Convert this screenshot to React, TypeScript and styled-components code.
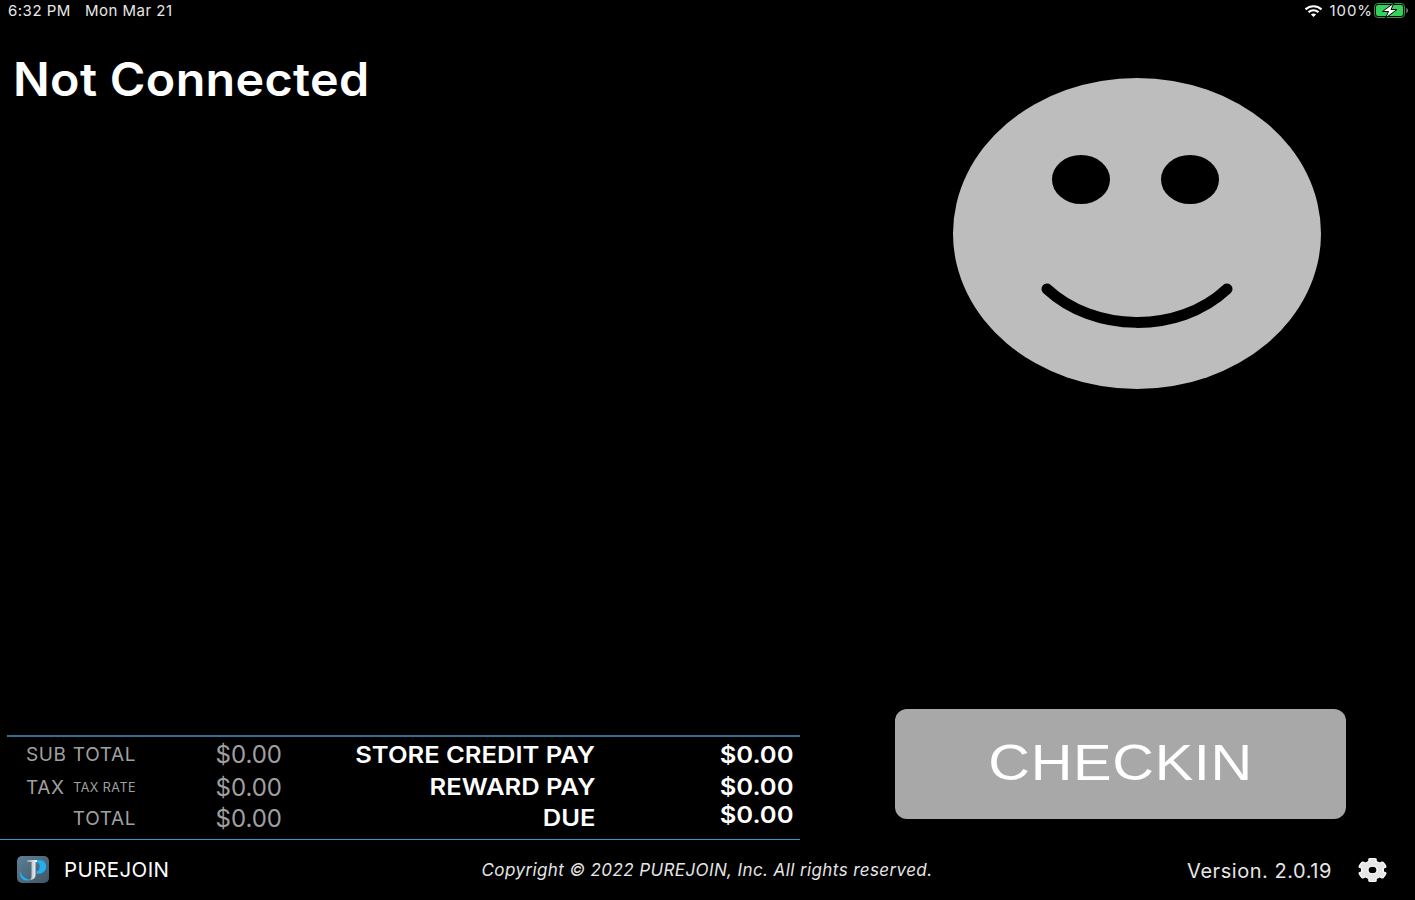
import { createGlobalStyle, styled } from "styled-components";
import { FaCog } from "react-icons/fa";

const GlobalStyle = createGlobalStyle`
  html, body {
    margin: 0;
    padding: 0;
    background: #000;
  }
  body {
    font-family: Inter, "Liberation Sans", sans-serif;
    color: #fff;
  }
`;

const Page = styled.div`
  width: 1415px;
  height: 900px;
  display: flex;
  flex-direction: column;
  background: #000;
  overflow: hidden;
`;

const StatusBar = styled.div`
  height: 21px;
  flex: none;
  display: flex;
  align-items: center;
  justify-content: space-between;
  padding: 0 6px 0 8px;
  font-size: 15px;
  letter-spacing: 0.5px;
  color: #e8e8e8;
`;

const StatusGroup = styled.div<{ $gap: number }>`
  display: flex;
  align-items: center;
  gap: ${(p) => p.$gap}px;
`;

const BatteryPercent = styled.span`
  margin: 0 -4px 0 1px;
  letter-spacing: 0.95px;
`;

const Main = styled.div`
  flex: 1;
  display: grid;
  grid-template-columns: 800px 1fr;
  min-height: 0;
`;

const LeftColumn = styled.div`
  display: flex;
  flex-direction: column;
  justify-content: space-between;
`;

const Title = styled.h1`
  margin: 29px 0 0 13px;
  font-size: 46px;
  line-height: 58px;
  font-weight: 600;
  letter-spacing: 0.3px;
  transform: scaleX(1.053);
  transform-origin: left center;
`;

const RightColumn = styled.div`
  display: flex;
  flex-direction: column;
  justify-content: space-between;
  padding: 57px 69px 20px 95px;
`;

const Face = styled.svg`
  display: block;
  width: 368px;
  height: 311px;
  margin-left: 58px;
`;

const CheckinButton = styled.button`
  width: 451px;
  height: 110px;
  padding: 0 0 2px;
  border: 0;
  border-radius: 12px;
  background: #a8a8a8;
  color: #fff;
  font-family: "Liberation Sans", Arial, sans-serif;
  font-size: 50px;
  line-height: 1;
`;

const CheckinLabel = styled.span`
  display: inline-block;
  letter-spacing: 0.6px;
  transform: scaleX(1.155);
`;

const TotalsFrame = styled.div`
  margin-left: 7px;
  border-top: 2px solid #2f6f92;
`;

const Totals = styled.div`
  height: 102px;
  box-sizing: border-box;
  padding: 0 6px;
  display: flex;
  justify-content: space-between;
`;

const SummaryGrid = styled.div`
  display: grid;
  grid-template-columns: 110px 146px;
  grid-template-rows: 34px 32px 30px;
  padding-left: 13px;
  color: #a0a0a0;
  align-items: center;
`;

const SummaryLabel = styled.div<{ $end?: boolean }>`
  display: flex;
  justify-content: ${(p) => (p.$end ? "flex-end" : "space-between")};
  align-items: center;
  font-size: 19px;
  letter-spacing: 0.6px;
  white-space: nowrap;
`;

const TaxRate = styled.span`
  font-size: 12.5px;
  letter-spacing: 0.5px;
`;

const SummaryAmount = styled.div`
  font-size: 24px;
  text-align: right;
`;

const PayGrid = styled.div`
  display: grid;
  grid-template-columns: 240px 199px;
  grid-template-rows: 32px 32px 30px;
  padding-top: 2px;
  align-items: center;
  font-size: 23px;
  line-height: 24px;
  font-weight: 600;
  text-align: right;
`;

const PayLabel = styled.span`
  display: inline-block;
  white-space: nowrap;
  transform: scaleX(1.11);
  transform-origin: right center;
`;

const PayAmount = styled.div<{ $raised?: boolean }>`
  align-self: ${(p) => (p.$raised ? "start" : "center")};
`;

const BottomRule = styled.div`
  height: 1px;
  width: 800px;
  background: #3b93c9;
`;

const Footer = styled.div`
  height: 60px;
  flex: none;
  display: grid;
  grid-template-columns: 1fr auto 1fr;
  align-items: center;
  padding: 0 28px 0 17px;
`;

const Brand = styled.div`
  display: flex;
  align-items: center;
  gap: 15px;
  font-size: 20.5px;
  letter-spacing: 0.4px;
`;

const BrandName = styled.span`
  padding-bottom: 2px;
`;

const Copyright = styled.div`
  margin-left: 10px;
  font-size: 17px;
  font-style: italic;
  letter-spacing: 0.4px;
  color: #e6e6e6;
`;

const VersionGroup = styled.div`
  display: flex;
  align-items: center;
  justify-content: flex-end;
  gap: 26px;
  font-size: 20px;
  letter-spacing: 0.55px;
  color: #e6e6e6;
`;

const VersionText = styled.span`
  padding-top: 2px;
`;

const Gear = styled(FaCog)`
  width: 29px;
  height: 24px;
  stroke: #fff;
  stroke-width: 22px;
`;

function Wifi() {
  return (
    <svg width="19" height="14" viewBox="0 0 19 14" fill="none" stroke="#fff" strokeWidth="2.2">
      <path d="M1.5 5.4 C6 1.2 13 1.2 17.5 5.4" />
      <path d="M4.5 8.2 C7.5 5.6 11.5 5.6 14.5 8.2" />
      <path d="M9.5 13 L6.9 10.4 C8.4 9.2 10.6 9.2 12.1 10.4 Z" fill="#fff" stroke="none" />
    </svg>
  );
}

function Battery() {
  return (
    <svg width="35" height="15" viewBox="0 0 35 15">
      <rect x="0.5" y="0.5" width="30" height="14" rx="3.5" fill="none" stroke="#2a9a44" />
      <rect x="2" y="2" width="27" height="11" rx="2" fill="#36d15c" />
      <path d="M32.5 5 C34 5.5 34 9.5 32.5 10 Z" fill="#bdbdbd" />
      <path d="M20 0 L8.5 8.5 H14.5 L11.5 15 L23 6.5 H17 Z" fill="#fff" stroke="#000" strokeWidth="1" />
    </svg>
  );
}

function Logo() {
  return (
    <svg width="32" height="28" viewBox="0 0 32 28">
      <defs>
        <linearGradient id="tile" x1="0" y1="0" x2="1" y2="1">
          <stop offset="0" stopColor="#5d7f95" />
          <stop offset="1" stopColor="#3e5666" />
        </linearGradient>
        <linearGradient id="stem" x1="0" y1="0" x2="1" y2="0">
          <stop offset="0" stopColor="#8d99a3" />
          <stop offset="1" stopColor="#ffffff" />
        </linearGradient>
      </defs>
      <rect width="32" height="27" rx="5" fill="url(#tile)" />
      <path d="M18 4 H22 C32 4 32 18 20 18 L19 15.5 C23.5 15.5 24 7 20 6.5 H18 Z" fill="#22aef0" />
      <path d="M10 4 H20 V6 H18.5 V19 C18.5 22 16.5 23.5 13 24 C14.5 22.5 14.5 21 14.5 19 V6 H10 Z" fill="url(#stem)" />
      <path d="M3 15 C5 21 9 23 13.5 24 C8 26 2 23 3 15 Z" fill="#22aef0" />
    </svg>
  );
}

export default function App() {
  return (
    <>
      <GlobalStyle />
      <Page>
        <StatusBar>
          <StatusGroup $gap={14}>
            <span>6:32 PM</span>
            <span>Mon Mar 21</span>
          </StatusGroup>
          <StatusGroup $gap={5}>
            <Wifi />
            <BatteryPercent>100%</BatteryPercent>
            <Battery />
          </StatusGroup>
        </StatusBar>
        <Main>
          <LeftColumn>
            <Title>Not Connected</Title>
            <TotalsFrame>
              <Totals>
                <SummaryGrid>
                  <SummaryLabel>
                    <span>SUB</span>
                    <span>TOTAL</span>
                  </SummaryLabel>
                  <SummaryAmount>$0.00</SummaryAmount>
                  <SummaryLabel>
                    <span>TAX</span>
                    <TaxRate>TAX RATE</TaxRate>
                  </SummaryLabel>
                  <SummaryAmount>$0.00</SummaryAmount>
                  <SummaryLabel $end>TOTAL</SummaryLabel>
                  <SummaryAmount>$0.00</SummaryAmount>
                </SummaryGrid>
                <PayGrid>
                  <div><PayLabel>STORE CREDIT PAY</PayLabel></div>
                  <PayAmount><PayLabel>$0.00</PayLabel></PayAmount>
                  <div><PayLabel>REWARD PAY</PayLabel></div>
                  <PayAmount><PayLabel>$0.00</PayLabel></PayAmount>
                  <div><PayLabel>DUE</PayLabel></div>
                  <PayAmount $raised><PayLabel>$0.00</PayLabel></PayAmount>
                </PayGrid>
              </Totals>
            </TotalsFrame>
          </LeftColumn>
          <RightColumn>
            <Face viewBox="0 0 368 311">
              <ellipse cx="184" cy="155.5" rx="184" ry="155.5" fill="#bdbdbd" />
              <ellipse cx="128" cy="101.5" rx="29" ry="24.5" fill="#000" />
              <ellipse cx="237" cy="101.5" rx="29" ry="24.5" fill="#000" />
              <path d="M94 211 C140 254 225 257 274 211" fill="none" stroke="#000" strokeWidth="11" strokeLinecap="round" />
            </Face>
            <CheckinButton><CheckinLabel>CHECKIN</CheckinLabel></CheckinButton>
          </RightColumn>
        </Main>
        <BottomRule />
        <Footer>
          <Brand>
            <Logo />
            <BrandName>PUREJOIN</BrandName>
          </Brand>
          <Copyright>Copyright © 2022 PUREJOIN, Inc. All rights reserved.</Copyright>
          <VersionGroup>
            <VersionText>Version. 2.0.19</VersionText>
            <Gear preserveAspectRatio="none" />
          </VersionGroup>
        </Footer>
      </Page>
    </>
  );
}
